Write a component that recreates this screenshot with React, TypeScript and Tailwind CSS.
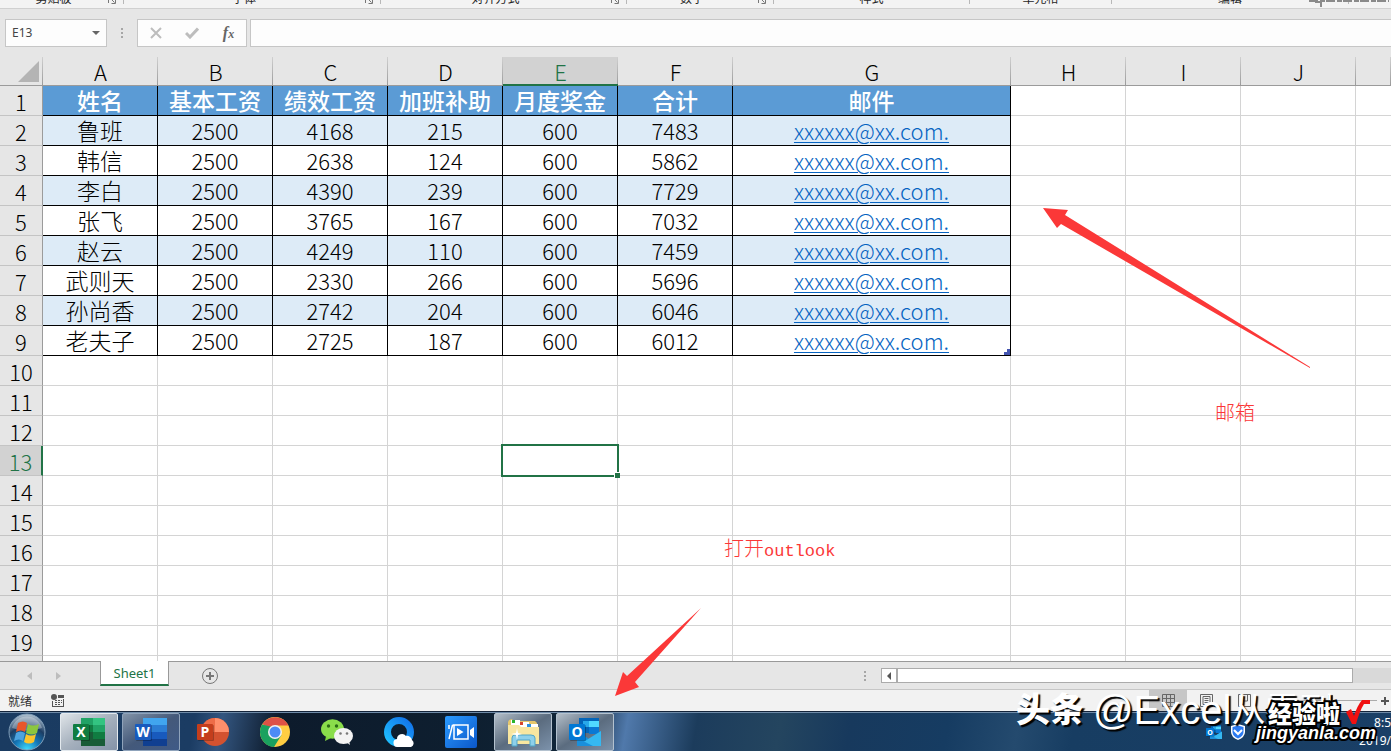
import React from 'react';
import clsx from 'clsx';

const columns = [
  { name: 'A', width: 'w-[115px]' },
  { name: 'B', width: 'w-[115px]' },
  { name: 'C', width: 'w-[115px]' },
  { name: 'D', width: 'w-[115px]' },
  { name: 'E', width: 'w-[115px]' },
  { name: 'F', width: 'w-[115px]' },
  { name: 'G', width: 'w-[278px]' },
  { name: 'H', width: 'w-[115px]' },
  { name: 'I', width: 'w-[115px]' },
  { name: 'J', width: 'w-[115px]' },
  { name: '', width: '' }
];

const sheet = [
  ['姓名', '基本工资', '绩效工资', '加班补助', '月度奖金', '合计', '邮件'],
  ['鲁班', '2500', '4168', '215', '600', '7483', 'xxxxxx@xx.com.'],
  ['韩信', '2500', '2638', '124', '600', '5862', 'xxxxxx@xx.com.'],
  ['李白', '2500', '4390', '239', '600', '7729', 'xxxxxx@xx.com.'],
  ['张飞', '2500', '3765', '167', '600', '7032', 'xxxxxx@xx.com.'],
  ['赵云', '2500', '4249', '110', '600', '7459', 'xxxxxx@xx.com.'],
  ['武则天', '2500', '2330', '266', '600', '5696', 'xxxxxx@xx.com.'],
  ['孙尚香', '2500', '2742', '204', '600', '6046', 'xxxxxx@xx.com.'],
  ['老夫子', '2500', '2725', '187', '600', '6012', 'xxxxxx@xx.com.']
];

const ribbonGroups = [
  { label: '剪贴板', width: 'w-[124px]', launcher: true },
  { label: '字体', width: 'w-[257px]', launcher: true },
  { label: '对齐方式', width: 'w-[246px]', launcher: true },
  { label: '数字', width: 'w-[147px]', launcher: true },
  { label: '样式', width: 'w-[196px]', launcher: false },
  { label: '单元格', width: 'w-[142px]', launcher: false },
  { label: '编辑', width: 'w-[237px]', launcher: false }
];

const ROW_COUNT = 20;
const ACTIVE_ROW = 13;
const ACTIVE_COLUMN = 'E';

const Ribbon: React.FC = () => (
  <div className="flex h-[9px] shrink-0 items-end overflow-hidden border-b border-[#d0d0d0] bg-[#f3f3f3] text-xs leading-3 text-[#262626]">
    {ribbonGroups.map((group) => (
      <div key={group.label} className={clsx('flex shrink-0 border-r border-[#b8b8b8] mb-1', group.width)}>
        <span className="flex-1 text-center">{group.label}</span>
        {group.launcher && (
          <svg className="mr-1 w-3 h-3" viewBox="0 0 12 12" fill="none" stroke="#777">
            <path d="M1.5 11V4.5h7M4.5 7.5l3 3M8.5 7v4.5h-4" />
          </svg>
        )}
      </div>
    ))}
    <svg className="-ml-10 h-2 w-20 shrink-0" viewBox="0 0 80 8" fill="none" stroke="#8a8a8a">
      <path d="M0 1h80" strokeWidth="2" strokeDasharray="9 2 5 1" />
      <path d="M6 2l6 0v5" strokeWidth="2" />
    </svg>
  </div>
);

const Dots: React.FC = () => (
  <div className="flex flex-col gap-0.5">
    <span className="w-0.5 h-0.5 bg-[#a6a6a6]" />
    <span className="w-0.5 h-0.5 bg-[#a6a6a6]" />
    <span className="w-0.5 h-0.5 bg-[#a6a6a6]" />
  </div>
);

const FormulaBar: React.FC = () => (
  <div className="flex h-12 shrink-0 items-start bg-[#e6e6e6] pt-[10px] pl-[5px]">
    <div className="flex h-7 w-[102px] items-center justify-between border border-[#c6c6c6] bg-[#fdfdfd] pr-1.5 pl-1.5">
      <input
        aria-label="名称框"
        defaultValue="E13"
        className="w-16 bg-transparent font-['Noto_Sans',sans-serif] text-xs text-[#444] outline-none"
      />
      <button aria-label="展开名称框">
        <svg className="w-2 h-1" viewBox="0 0 8 4" fill="#666">
          <path d="M0 0h8L4 4z" />
        </svg>
      </button>
    </div>
    <div className="flex h-7 w-[30px] items-center justify-center">
      <Dots />
    </div>
    <div className="flex h-7 w-[110px] items-center justify-around border border-[#c6c6c6] bg-[#fdfdfd]">
      <button aria-label="取消">
        <svg className="w-3 h-3" viewBox="0 0 12 12" stroke="#bdbdbd" strokeWidth="2">
          <path d="M1 1l10 10M11 1L1 11" />
        </svg>
      </button>
      <button aria-label="输入">
        <svg className="w-[14px] h-3" viewBox="0 0 14 12" stroke="#bdbdbd" strokeWidth="3" fill="none">
          <path d="M1 6l4 4 8-8.5" />
        </svg>
      </button>
      <button
        aria-label="插入函数"
        className="font-['Liberation_Serif',serif] text-base leading-4 font-bold text-[#666] italic"
      >
        f<span className="text-xs">x</span>
      </button>
    </div>
    <input aria-label="编辑栏" className="ml-[3px] h-7 min-w-0 flex-1 border border-r-0 border-[#c6c6c6] bg-[#fdfdfd] px-2 outline-none" />
  </div>
);

const Cell: React.FC<{ row: number; col: number }> = ({ row, col }) => {
  const value = sheet[row - 1]?.[col];
  const active = row === ACTIVE_ROW && columns[col].name === ACTIVE_COLUMN;

  if (value === undefined) {
    return (
      <td
        className={clsx(
          'h-[30px] border-b border-[#d4d4d4] p-0',
          col < columns.length - 1 && 'border-r',
          active && 'relative'
        )}
      >
        {active && (
          <div className="absolute -inset-0.5 border-2 border-[#217346]">
            <span className="absolute -right-[3px] -bottom-[3px] h-1.5 w-1.5 border-t border-l border-white bg-[#217346]" />
          </div>
        )}
      </td>
    );
  }

  return (
    <td
      className={clsx(
        'relative h-[30px] border-r border-b border-black px-0 pt-0 pb-0.5 text-center leading-[26px] whitespace-nowrap',
        row === 1 && 'bg-[#5b9bd5] text-[23px] font-medium text-white',
        row > 1 && row % 2 === 0 && 'bg-[#ddebf7]',
        row > 1 && col === 0 && 'text-[23px]'
      )}
    >
      {row > 1 && col === 6 ? (
        <a href="mailto:xxxxxx@xx.com" className="text-[#0563c1] underline decoration-1 underline-offset-2">
          {value}
        </a>
      ) : (
        value
      )}
      {row === sheet.length && col === 6 && (
        <svg className="absolute right-0 bottom-0 w-1.5 h-1.5" viewBox="0 0 6 6" fill="#4455b0">
          <path d="M3 0h3v6H0V3h3z" />
        </svg>
      )}
    </td>
  );
};

const Grid: React.FC = () => (
  <div className="min-h-0 flex-1 overflow-hidden bg-white">
    <table className="w-full table-fixed border-separate border-spacing-0 font-['Noto_Sans_CJK_SC',sans-serif] text-[22px] leading-7 font-light text-black">
      <thead>
        <tr>
          <th className="w-[43px] h-[29px] border-b border-[#9b9b9b] bg-[#e6e6e6] bg-[linear-gradient(#d0d0d0,#9b9b9b)] bg-[length:1px_100%] bg-right bg-no-repeat p-0 font-light">
            <svg className="ml-auto mr-1 w-[21px] h-[21px]" viewBox="0 0 21 21" fill="#b4b4b4">
              <path d="M21 0v21H0z" />
            </svg>
          </th>
          {columns.map((column, index) => (
            <th
              key={index}
              className={clsx(
                'h-[29px] bg-[linear-gradient(#d0d0d0,#9b9b9b)] bg-[length:1px_100%] bg-right bg-no-repeat px-0 pb-0 font-light leading-[25px]',
                column.width,
                column.name === ACTIVE_COLUMN
                  ? 'border-b-2 border-[#217346] bg-[#d2d2d2] pt-px text-[#217346]'
                  : 'border-b border-[#9b9b9b] bg-[#e6e6e6] pt-0'
              )}
            >
              {column.name}
            </th>
          ))}
        </tr>
      </thead>
      <tbody>
        {Array.from({ length: ROW_COUNT }, (_, i) => i + 1).map((row) => (
          <tr key={row}>
            <th
              className={clsx(
                'h-[30px] border-b border-b-[#c4c4c4] p-0 font-light',
                row === ACTIVE_ROW
                  ? 'border-r-2 border-r-[#217346] bg-[#d2d2d2] text-[#217346]'
                  : 'border-r border-r-[#9b9b9b] bg-[#e6e6e6]'
              )}
            >
              {row}
            </th>
            {columns.map((_, col) => (
              <Cell key={col} row={row} col={col} />
            ))}
          </tr>
        ))}
      </tbody>
    </table>
  </div>
);

const SheetBar: React.FC = () => (
  <div className="flex h-7 shrink-0 border-t border-[#999] bg-[#e6e6e6]">
    <div className="flex w-[100px] items-center gap-6 pl-[27px]">
      <button aria-label="上一个工作表">
        <svg className="w-[5px] h-2" viewBox="0 0 5 8" fill="#bdbdbd">
          <path d="M5 0v8L0 4z" />
        </svg>
      </button>
      <button aria-label="下一个工作表">
        <svg className="w-[5px] h-2" viewBox="0 0 5 8" fill="#bdbdbd">
          <path d="M0 0v8l5-4z" />
        </svg>
      </button>
    </div>
    <button className="-mt-px h-[25px] w-[69px] border-x border-b-2 border-x-[#999] border-b-[#217346] bg-white pt-0.5 font-['Noto_Sans',sans-serif] text-[13px] text-[#217346]">
      Sheet1
    </button>
    <button aria-label="新工作表" className="ml-8 self-center">
      <svg className="w-[18px] h-[18px]" viewBox="0 0 18 18" fill="none" stroke="#777">
        <circle cx="9" cy="9" r="7.5" />
        <path d="M9 5v8M5 9h8" strokeWidth="2" />
      </svg>
    </button>
    <div className="flex-1" />
    <div className="flex w-[527px] items-center">
      <Dots />
      <button
        aria-label="向左滚动"
        className="ml-[15px] flex h-[15px] w-4 items-center justify-center border border-[#ababab] bg-white"
      >
        <svg className="w-1 h-2" viewBox="0 0 4 8" fill="#555">
          <path d="M4 0v8L0 4z" />
        </svg>
      </button>
      <div className="h-[15px] flex-1 border border-[#ababab] bg-white" />
      <div className="h-[15px] w-[38px] bg-[#d9d9d9]" />
    </div>
  </div>
);

const StatusBar: React.FC = () => (
  <div className="flex h-[22px] shrink-0 items-center border-t border-[#c6c6c6] bg-[#f2f2f2] text-xs text-[#333]">
    <span className="ml-2 font-['Noto_Sans_CJK_SC',sans-serif]">就绪</span>
    <svg className="ml-[19px] w-[13px] h-[13px]" viewBox="0 0 13 13" fill="#555">
      <circle cx="3" cy="3" r="3" />
      <path d="M7 1h6v3H7zM1 7h1v6H1zM12 5h1v8h-1zM1 12h12v1H1zM4 6h2v1H4zM7 6h2v1H7zM10 6h1v1h-1zM4 8h2v1H4zM7 8h2v1H7zM10 8h1v1h-1zM4 10h2v1H4zM7 10h2v1H7z" />
    </svg>
    <div className="flex-1" />
    <div className="flex h-full w-[242px] items-center">
      <button aria-label="普通" className="flex h-full w-[38px] items-center justify-center bg-[#c6c6c6]">
        <svg className="w-[13px] h-[13px]" viewBox="0 0 13 13" fill="none" stroke="#666">
          <path d="M.5.5h12v12H.5zM.5 4.5h12M.5 8.5h12M4.5 0v13M8.5 0v13" />
        </svg>
      </button>
      <button aria-label="页面布局" className="flex h-full w-[38px] items-center justify-center">
        <svg className="w-[13px] h-[13px]" viewBox="0 0 13 13" fill="none" stroke="#666">
          <path d="M.5.5h12v12H.5zM3 2.5h7v8H3zM4.5 4.5h4M4.5 6.5h4M4.5 8.5h4" />
        </svg>
      </button>
      <button aria-label="分页预览" className="flex h-full w-[38px] items-center justify-center">
        <svg className="w-[13px] h-[13px]" viewBox="0 0 13 13" fill="none" stroke="#666">
          <path d="M.5.5h12v12H.5zM4.5 0v7h5V0" />
        </svg>
      </button>
      <div className="ml-5 flex h-full flex-1 items-center">
        <span className="h-px flex-1 bg-[#ababab]" />
        <span className="h-[11px] w-[5px] bg-[#666]" />
        <span className="h-px flex-1 bg-[#ababab]" />
      </div>
      <button aria-label="放大" className="mr-0.5 ml-1">
        <svg className="w-2 h-2" viewBox="0 0 8 8" stroke="#555" strokeWidth="2">
          <path d="M4 0v8M0 4h8" />
        </svg>
      </button>
    </div>
  </div>
);

const Badge: React.FC<{ letter: string; color: string }> = ({ letter, color }) => (
  <>
    <rect x="1" y="9" width="16" height="16" rx="1" fill="#000" opacity=".25" />
    <rect y="8" width="16" height="16" rx="1" fill={color} />
    <text x="8" y="21" textAnchor="middle" fontSize="14" fontWeight="700" fill="#fff" fontFamily="Open Sans, sans-serif">
      {letter}
    </text>
  </>
);

const ExcelIcon = (
  <>
    <path d="M8 2h12v7H8z" fill="#21a366" />
    <path d="M20 2h12v7H20z" fill="#33c481" />
    <path d="M8 9h12v7H8z" fill="#107c41" />
    <path d="M20 9h12v7H20z" fill="#21a366" />
    <path d="M8 16h12v14H8z" fill="#185c37" />
    <path d="M20 16h12v7H20z" fill="#107c41" />
    <path d="M20 23h12v7H20z" fill="#185c37" />
    <Badge letter="X" color="#107c41" />
  </>
);

const WordIcon = (
  <>
    <path d="M8 2h24v7H8z" fill="#41a5ee" />
    <path d="M8 9h24v7H8z" fill="#2b7cd3" />
    <path d="M8 16h24v7H8z" fill="#185abd" />
    <path d="M8 23h24v7H8z" fill="#103f91" />
    <Badge letter="W" color="#185abd" />
  </>
);

const PowerPointIcon = (
  <>
    <circle cx="18" cy="16" r="14" fill="#d35230" />
    <path d="M18 2a14 14 0 0 0-14 14h14z" fill="#ed6c47" />
    <path d="M18 2a14 14 0 0 1 14 14H18z" fill="#ff8f6b" />
    <Badge letter="P" color="#c43e1c" />
  </>
);

const ChromeIcon = (
  <>
    <circle cx="16" cy="16" r="15" fill="#ffcd42" />
    <path d="M16 16L3 8.500A15 15 0 0 0 15 31l7.500-12z" fill="#1aa15f" />
    <path d="M16 16L3.500 8A15 15 0 0 1 29.500 9.500H16z" fill="#de5246" />
    <path d="M3 8.500L9.500 19l4-8z" fill="#1aa15f" />
    <circle cx="16" cy="16" r="7" fill="#f1f1f1" />
    <circle cx="16" cy="16" r="5.500" fill="#4c8bf5" />
  </>
);

const WeChatIcon = (
  <>
    <path d="M5 20l-1 5 6-3z" fill="#7fd33f" />
    <ellipse cx="11.500" cy="13" rx="11.500" ry="9.700" fill="#8add4b" />
    <circle cx="7.500" cy="10" r="1.700" fill="#2b6b14" />
    <circle cx="15.500" cy="10" r="1.700" fill="#2b6b14" />
    <path d="M25 26l4 3-1-5z" fill="#e4e4e4" />
    <ellipse cx="22.500" cy="20" rx="9.500" ry="8" fill="#f3f3f3" />
    <circle cx="19.500" cy="17.500" r="1.300" fill="#777" />
    <circle cx="26" cy="17.500" r="1.300" fill="#777" />
  </>
);

const BrowserIcon = (
  <>
    <defs>
      <linearGradient id="ring" x1="0" y1="1" x2="1" y2="0">
        <stop offset="0" stopColor="#1fc0ff" />
        <stop offset="1" stopColor="#1273ea" />
      </linearGradient>
    </defs>
    <circle cx="16" cy="16" r="11.500" fill="none" stroke="url(#ring)" strokeWidth="7" />
    <path d="M15 31a4 4 0 0 1-1-8 5 5 0 0 1 9-3 5 5 0 0 1 6 4 4 4 0 0 1-1 7z" fill="#fff" />
  </>
);

const VideoIcon = (
  <>
    <defs>
      <linearGradient id="video" x1="0" y1="0" x2="1" y2="1">
        <stop offset="0" stopColor="#2b9bff" />
        <stop offset="1" stopColor="#0b57c9" />
      </linearGradient>
    </defs>
    <rect width="32" height="32" rx="2" fill="url(#video)" />
    <path d="M7.500 9h15.500v14H9V9M4 9v4M7.500 9L4 23" fill="none" stroke="#fff" strokeWidth="1.500" />
    <path d="M12 12l6.500 4-6.500 4zM25 14l4-3v11l-4-3z" fill="#fff" />
  </>
);

const FolderIcon = (
  <>
    <path d="M2 4l3-1 1 2h22l2 2v21H1V6z" fill="#e5c66c" />
    <path d="M4 4h9v5H4z" fill="#fff" />
    <path d="M5 4h3v3H5z" fill="#2cb52c" />
    <path d="M12 6h10v5H12z" fill="#fff" />
    <path d="M13 6h3v3h-3z" fill="#d6432d" />
    <path d="M19 8h12v5H19z" fill="#fff" />
    <path d="M20 8h4v3h-4z" fill="#2a8fe0" />
    <path d="M1 9h11l2 2h18v17H1z" fill="#f8e6a0" />
    <path d="M5 30V22q0-3 3-3h16q4 0 4 3v8h-5v-6H10v6z" fill="#8ed0ea" stroke="#4fa5c8" />
    <path d="M10 12l1 5 4 1-4 1-1 5-1-5-5-1 5-1z" fill="#fff" />
  </>
);

const OutlookIcon = (
  <>
    <path d="M10 2h20v15H10z" fill="#0364b8" />
    <path d="M20 5h10v6H20z" fill="#50d9ff" />
    <path d="M14 5h6v6h-6z" fill="#28a8ea" />
    <path d="M20 11h10v7H20z" fill="#0a78d4" />
    <path d="M8 15l12 8 12-8v15H8z" fill="#1490df" />
    <path d="M32 15v15L8 30z" fill="#35b8f1" />
    <path d="M8 22l16 8H8z" fill="#1a8fdb" />
    <Badge letter="O" color="#0078d4" />
  </>
);

const apps = [
  { name: 'Excel', icon: ExcelIcon, state: 'active' },
  { name: 'Word', icon: WordIcon, state: 'running' },
  { name: 'PowerPoint', icon: PowerPointIcon, state: 'idle' },
  { name: 'Chrome', icon: ChromeIcon, state: 'idle' },
  { name: '微信', icon: WeChatIcon, state: 'idle' },
  { name: 'QQ浏览器', icon: BrowserIcon, state: 'idle' },
  { name: '录屏', icon: VideoIcon, state: 'idle' },
  { name: '资源管理器', icon: FolderIcon, state: 'window' },
  { name: 'Outlook', icon: OutlookIcon, state: 'window' }
];

const Taskbar: React.FC = () => (
  <div className="flex h-10 shrink-0 items-center border-t border-[#14243a] bg-[linear-gradient(100deg,#1a3b61_0%,#1b3c63_14%,#33557f_16%,#0d1b2c_20%,#0e1f30_34%,#10263a_42%,#5079ab_45%,#1c3c5c_50%,#24455f_56%,#17395d_61%,#163c62_68%,#244a6e_73%,#173d62_77%,#1a3f66_100%)] font-['Noto_Sans',sans-serif] text-white shadow-[inset_0_1px_0_#6f8ba8]">
    <button aria-label="开始" className="ml-2 h-[38px] w-[38px]">
      <svg className="w-full h-full" viewBox="0 0 38 38">
        <defs>
          <radialGradient id="orb" cx=".5" cy="1" r="1">
            <stop offset="0" stopColor="#3fe0ff" />
            <stop offset=".35" stopColor="#1577b8" />
            <stop offset=".65" stopColor="#1c3d63" />
            <stop offset="1" stopColor="#b5c6d4" />
          </radialGradient>
        </defs>
        <circle cx="19" cy="19" r="18" fill="url(#orb)" stroke="#7f9db8" />
        <path d="M4 15a15.500 15.500 0 0 1 30 0q-15 5-30 0z" fill="#fff" opacity=".3" />
        <path d="M10 10q5-3 9 0l-2 9q-4-3-9 0z" fill="#e8562a" />
        <path d="M20 11q5 3 11 0l-2 9q-5 3-11 0z" fill="#8cc63e" />
        <path d="M8 20q4-3 9 0l-2 8q-4-3-9 0z" fill="#4da3e0" />
        <path d="M18 21q5 3 10 0l-2 8q-5 3-10 0z" fill="#fbc52c" />
      </svg>
    </button>
    <div className="ml-[14px] flex gap-1">
      {apps.map((app) => (
        <button
          key={app.name}
          aria-label={app.name}
          className={clsx(
            'flex h-[38px] w-[58px] items-center justify-center rounded-xs border',
            app.state === 'active' && 'border-[#e3e9ee] bg-linear-to-br from-[#dfe4e8] via-[#a5b0bd] to-[#8493a8]',
            app.state === 'running' && 'border-[#8fa3bb] bg-linear-to-br from-[#8394a8] via-[#44597a] to-[#3f5a87]',
            app.state === 'window' && 'border-[#b4c2cf] bg-linear-to-br from-[#b3bec8] via-[#5b6c7f] to-[#7c92ab]',
            app.state === 'idle' && 'border-transparent'
          )}
        >
          <svg className="w-8 h-8" viewBox="0 0 32 32">
            {app.icon}
          </svg>
        </button>
      ))}
    </div>
    <div className="flex-1" />
    <div className="flex h-full w-[185px] items-center">
      <svg className="w-4 h-4" viewBox="0 0 32 32">
        {OutlookIcon}
      </svg>
      <svg className="ml-2 w-4 h-4" viewBox="0 0 16 16">
        <path d="M8 0l7 2v6q0 5-7 8-7-3-7-8V2z" fill="#fff" />
        <path d="M8 1.500l5.500 1.500v5q0 4-5.500 6.500Q2.500 12 2.500 8V3z" fill="#2b7bf3" />
        <path d="M4 6l4 4 4-4" fill="none" stroke="#fff" strokeWidth="2" />
      </svg>
      <div className="flex-1 text-right text-xs leading-[18px]">
        <div>8:5</div>
        <div>2019/</div>
      </div>
    </div>
  </div>
);

const Annotations: React.FC = () => (
  <div className="pointer-events-none font-['Liberation_Mono','Noto_Sans_CJK_SC',monospace] text-[17px] leading-6 text-[#fb3838]">
    <svg className="absolute top-[208px] left-[1043px] h-40 w-[267px]" viewBox="0 0 267 160" fill="#fb3838">
      <path d="M0 0L25 2 22 7 267 159 267 160 18 16 14 20z" />
    </svg>
    <svg className="absolute top-[608px] left-[615px] h-[88px] w-[86px]" viewBox="0 0 86 88" fill="#fb3838">
      <path d="M0 88L8 64 12 68 86 0 20 74 24 79z" />
    </svg>
    <p className="absolute top-[403px] left-[1215px] text-xl leading-6 font-light">邮箱</p>
    <p className="absolute top-[539px] left-[724px] whitespace-nowrap">
      <span className="text-xl leading-6 font-light">打开</span>outlook
    </p>
  </div>
);

const Watermarks: React.FC = () => (
  <div className="pointer-events-none whitespace-nowrap text-white">
    <p className="absolute bottom-4 left-[1016px] flex items-center font-['Liberation_Sans','Noto_Sans_CJK_SC',sans-serif] text-[34px] leading-[50px] [text-shadow:2px_2px_1px_#000]">
      <span className="font-black">头条</span>
      <span className="ml-[9px] text-[40px]">@Excel</span>
      <span>从零到</span>
    </p>
    <p className="absolute right-[51px] bottom-[24px] font-['Noto_Sans_CJK_SC',sans-serif] text-2xl leading-7 font-black [paint-order:stroke] [-webkit-text-stroke:4px_#000]">
      经验啦
    </p>
    <svg className="absolute right-[20px] bottom-[26px] h-[26px] w-[26px]" viewBox="0 0 26 26" fill="#f01010">
      <path d="M1 13l5-3 3 7Q12 7 17 1h8v4h-6Q15 11 11 25H7z" />
    </svg>
    <p className="absolute right-[15px] bottom-[6px] font-['Liberation_Sans',sans-serif] text-lg leading-6 font-bold italic [paint-order:stroke] [-webkit-text-stroke:4px_#000]">
      jingyanla.com
    </p>
  </div>
);

const App: React.FC = () => {
  return (
    <div className="relative flex h-screen flex-col overflow-hidden bg-[#e6e6e6] font-['Noto_Sans_CJK_SC',sans-serif]">
      <Ribbon />
      <FormulaBar />
      <Grid />
      <SheetBar />
      <StatusBar />
      <Taskbar />
      <Annotations />
      <Watermarks />
    </div>
  );
};

export default App;
